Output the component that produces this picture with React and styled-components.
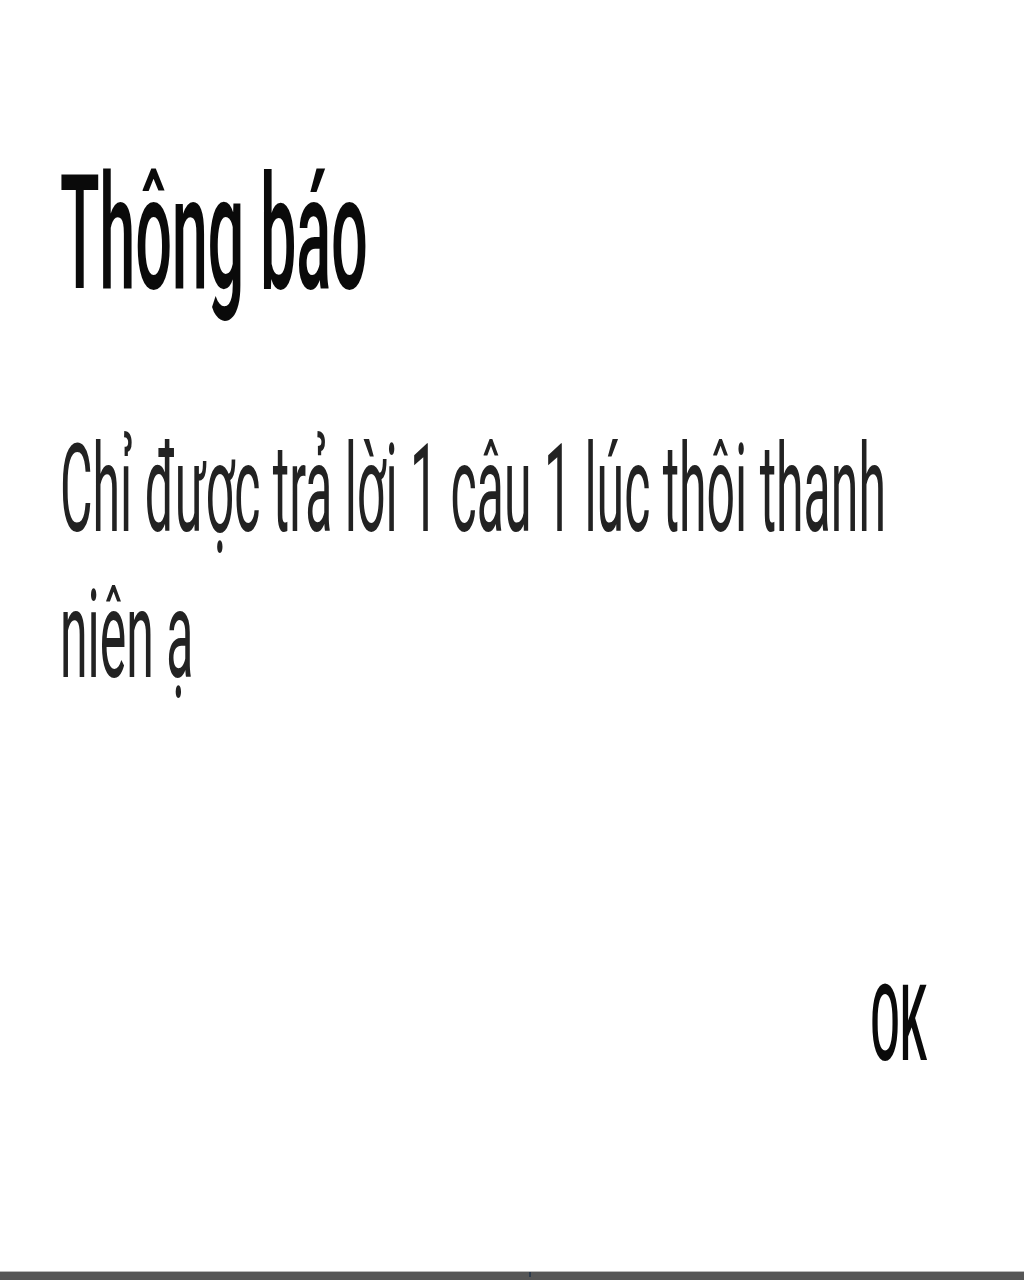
import React from "react";
import styled, { createGlobalStyle } from "styled-components";

const STRETCH = 2.46;

const GlobalStyle = createGlobalStyle`
  html, body {
    margin: 0;
    padding: 0;
    background: #ffffff;
  }
  body {
    font-family: Roboto, "Noto Sans", "Liberation Sans", sans-serif;
  }
`;

const Page = styled.div`
  width: 1024px;
  height: 1280px;
  display: flex;
  flex-direction: column;
  overflow: hidden;
  background: #ffffff;
`;

const Screen = styled.div`
  height: 1271px;
  overflow: hidden;
  flex-shrink: 0;
`;

const Dialog = styled.div`
  height: ${1271 / STRETCH}px;
  box-sizing: border-box;
  padding: 55.5px 97px 0 60px;
  display: flex;
  flex-direction: column;
  transform: scaleY(${STRETCH});
  transform-origin: top left;
`;

const Title = styled.h1`
  margin: 0;
  font-size: 65px;
  line-height: 78px;
  font-weight: 500;
  color: #0a0a0a;
  letter-spacing: -0.3px;
`;

const Message = styled.p`
  margin: 36.6px 0 0;
  font-size: 50px;
  line-height: 59px;
  font-weight: 400;
  color: #222222;
  max-width: 860px;
`;

const Actions = styled.div`
  margin-top: 103px;
  display: flex;
  justify-content: flex-end;
`;

const TextButton = styled.button`
  border: 0;
  background: none;
  padding: 0;
  font-family: inherit;
  font-size: 43px;
  line-height: 51px;
  font-weight: 500;
  color: #0a0a0a;
  cursor: pointer;
`;

const NavBar = styled.div`
  flex: 1;
  background: #565656;
  border-top: 1px solid #b8b8b8;
  display: flex;
  justify-content: center;
`;

const NavDot = styled.span`
  width: 2px;
  height: 5px;
  margin-left: 36px;
  background: #2c3a4a;
`;

export default function App() {
  return (
    <Page>
      <GlobalStyle />
      <Screen>
        <Dialog>
          <Title>Thông báo</Title>
          <Message>Chỉ được trả lời 1 câu 1 lúc thôi thanh niên ạ</Message>
          <Actions>
            <TextButton>OK</TextButton>
          </Actions>
        </Dialog>
      </Screen>
      <NavBar>
        <NavDot />
      </NavBar>
    </Page>
  );
}
